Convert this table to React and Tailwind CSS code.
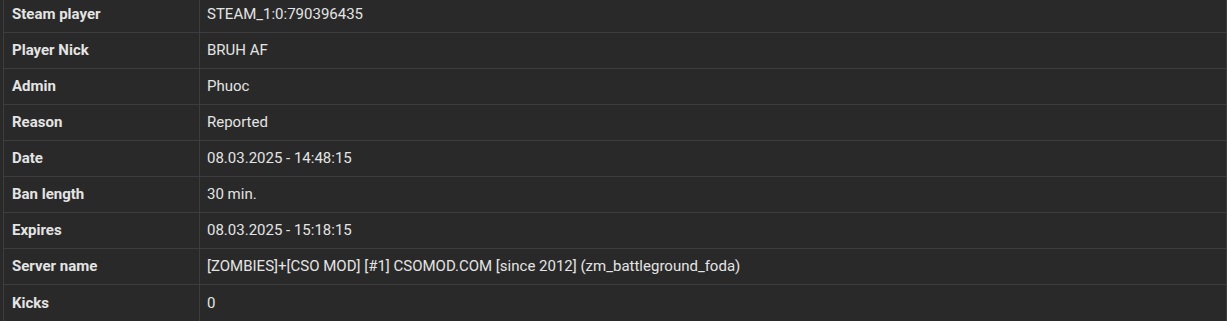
export default function App() {
  const rows = [
    ["Steam player", "STEAM_1:0:790396435"],
    ["Player Nick", "BRUH AF"],
    ["Admin", "Phuoc"],
    ["Reason", "Reported"],
    ["Date", "08.03.2025 - 14:48:15"],
    ["Ban length", "30 min."],
    ["Expires", "08.03.2025 - 15:18:15"],
    ["Server name", "[ZOMBIES]+[CSO MOD] [#1] CSOMOD.COM [since 2012] (zm_battleground_foda)"],
    ["Kicks", "0"],
  ];
  return (
    <div className="w-[1227px] h-[321px] overflow-hidden bg-[#292929] pl-[3px]" style={{ fontFamily: "Roboto, 'Liberation Sans', sans-serif" }}>
      <div className="-mt-[3px] border-l border-r border-b border-[#3d3d3d] text-[15px] text-[#e4e4e4]">
        {rows.map(([k, v], i) => (
          <div key={k} className={`flex h-[36px] ${i < rows.length - 1 ? "border-b border-[#3d3d3d]" : ""}`}>
            <div className="w-[196px] shrink-0 border-r border-[#3d3d3d] pl-[8px] flex items-center font-bold">{k}</div>
            <div className="flex-1 pl-[7px] flex items-center">{v}</div>
          </div>
        ))}
      </div>
    </div>
  );
}
